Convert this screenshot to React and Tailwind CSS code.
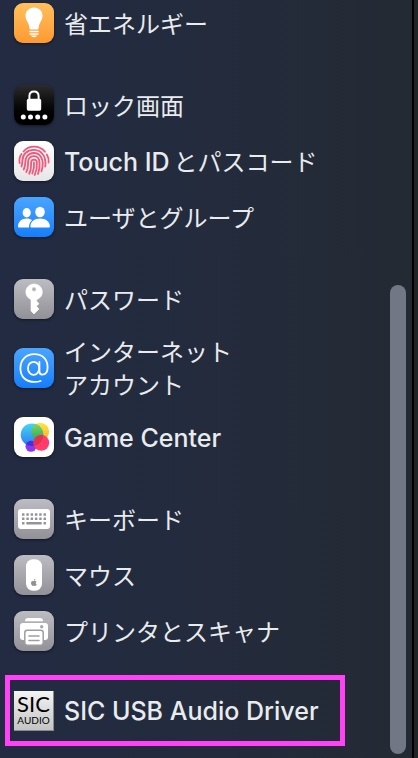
import { useId } from 'react';

const TILE = {
  orange: 'from-[#ffc05c] to-[#ff9930]',
  black: 'from-[#2c2c2e] to-[#000000]',
  white: 'from-[#ffffff] to-[#e6e6e8]',
  plain: 'from-[#ffffff] to-[#ffffff]',
  blue: 'from-[#4aa5ff] to-[#147efb]',
  gray: 'from-[#bdbcc2] to-[#929197]',
};

const Tile = ({ tone, children }) => (
  <span className={`block size-10 shrink-0 overflow-hidden rounded-[9px] bg-linear-to-b shadow-sm shadow-black/40 ${TILE[tone]}`}>
    <svg viewBox="0 0 40 40" className="block size-10" fill="none" aria-hidden="true">
      {children}
    </svg>
  </span>
);

const EnergyIcon = () => (
  <Tile tone="orange">
    <path
      d="M20 4.5c-5 0-8.5 3.6-8.5 8.3 0 3.3 1.6 5.4 2.8 7.8.8 1.7.9 3.3 1.2 5 .1.7.5 1 1.1 1h6.8c.6 0 1-.3 1.1-1 .3-1.7.4-3.3 1.2-5 1.2-2.4 2.8-4.5 2.8-7.8 0-4.7-3.5-8.3-8.5-8.3z"
      fill="#fff"
    />
    <path d="M15.8 28.5h8.4M16 31h8" stroke="#fff" strokeWidth="1.5" strokeLinecap="round" />
    <path d="M17 32.6h6c-.5 1.2-1.6 1.7-3 1.7s-2.5-.5-3-1.7z" fill="#fff" />
  </Tile>
);

const LockIcon = () => (
  <Tile tone="black">
    <path d="M15.4 15v-3.7c0-3 1.9-4.7 4.6-4.7s4.6 1.7 4.6 4.7V15" stroke="#fff" strokeWidth="2" />
    <rect x="12.8" y="13.8" width="14.4" height="12" rx="1.8" fill="#fff" />
    {[9.3, 16.5, 23.7, 30.9].map((x) => (
      <circle key={x} cx={x} cy="32" r="2.5" fill="#fff" />
    ))}
  </Tile>
);

const TouchIcon = () => (
  <Tile tone="white">
    <g stroke="#f2587a" strokeWidth="1.8" strokeLinecap="round">
      <path d="M9.5 10.5C12 7.3 15.8 5.6 20 5.6c4.5 0 8.5 2 11 5.2" />
      <path d="M5.7 22c-.6-3 0-6.5 1.8-9M32.8 13.5c1.6 2.5 2.2 5 1.8 8" />
      <path d="M7.5 25.5c2-7-.5-9.5 4-13.5 5-4.5 13-4 17 1 3 3.5 3.3 8 2.8 12.5" />
      <path d="M9.7 28.5c2.8-5 .3-9.5 3.3-13.3 3.5-4.4 10.5-4.2 13.7.3 2.5 3.7 2.3 9.5.8 14.8" />
      <path d="M12.3 31c2.7-4.6 1.2-8.5 2-11.7 1.5-5.3 9.3-5.5 10.8-.2.9 3.6.4 8.9-1.1 13.9" />
      <path d="M15.2 32.8c2.6-4.8 1.8-8.5 1.9-11.6.3-3.5 5.4-3.5 5.8 0 .3 4.3-.4 8.6-2.2 12.8" />
      <path d="M20 21.5c.3 3.7-.2 7.5-1.7 11" />
    </g>
  </Tile>
);

const UsersIcon = () => (
  <Tile tone="blue">
    <ellipse cx="12.7" cy="15.7" rx="4.1" ry="4.7" fill="#fff" />
    <path d="M4 29.5c0-4.6 3.5-8 8.7-8 2.2 0 4 .6 5.4 1.6-2 1.7-3 4-3.1 7.5H5c-.7 0-1-.4-1-1.1z" fill="#fff" />
    <ellipse cx="26" cy="15" rx="4.8" ry="5.3" fill="#fff" />
    <path d="M16.4 29.3c0-4.7 4-7.9 9.7-7.9s9.8 3.2 9.8 7.9c0 .9-.4 1.3-1.3 1.3H17.7c-.9 0-1.3-.4-1.3-1.3z" fill="#fff" />
  </Tile>
);

const KeyIcon = () => (
  <Tile tone="gray">
    <path
      fillRule="evenodd"
      d="M20 5a8 8 0 0 0-3 15.5v11.4l3 3.1 5-5-2.6-2.8 2.6-2.5-2.5-2.7v-1.3A8 8 0 0 0 20 5zm0 3a2.2 2.2 0 1 1 0 4.4 2.2 2.2 0 0 1 0-4.4z"
      fill="#fff"
      stroke="#fff"
      strokeWidth=".6"
      strokeLinejoin="round"
    />
  </Tile>
);

const AtIcon = () => (
  <Tile tone="blue">
    <g stroke="#fff" strokeWidth="1.8" strokeLinecap="round">
      <ellipse cx="19.6" cy="20.3" rx="5.7" ry="6.5" />
      <path d="M25.4 14v9.3c0 2.2 1 3.3 2.9 3.3 3.2 0 5.3-2.9 5.3-7.4 0-8.2-5.3-13-13.2-13C12 6.2 6.4 11.8 6.4 20.2c0 8.5 5.4 13.7 14.2 13.7 2.3 0 4.3-.3 6-.9" />
    </g>
  </Tile>
);

const GameIcon = () => {
  const id = useId();
  return (
    <Tile tone="plain">
      <defs>
        <linearGradient id={`${id}b`} x1="0" y1="0" x2="0" y2="1">
          <stop stopColor="#45d7f2" />
          <stop offset="1" stopColor="#2b79f5" />
        </linearGradient>
        <linearGradient id={`${id}y`} x1="0" y1="0" x2="0" y2="1">
          <stop stopColor="#ffe63d" />
          <stop offset="1" stopColor="#ffab2e" />
        </linearGradient>
        <linearGradient id={`${id}g`} x1="0" y1="0" x2="0" y2="1">
          <stop stopColor="#8fd65a" />
          <stop offset="1" stopColor="#20a869" />
        </linearGradient>
        <clipPath id={`${id}c`}>
          <circle cx="18" cy="17.8" r="11.3" />
        </clipPath>
      </defs>
      <circle cx="17" cy="29.3" r="5.5" fill="#8b35f5" />
      <circle cx="26.2" cy="14.6" r="8.9" fill={`url(#${id}y)`} />
      <circle cx="18" cy="17.8" r="11.3" fill={`url(#${id}b)`} />
      <g clipPath={`url(#${id}c)`}>
        <circle cx="26.2" cy="14.6" r="8.9" fill={`url(#${id}g)`} />
        <circle cx="17" cy="29.3" r="5.5" fill="#4b2dd9" />
      </g>
      <circle cx="27.3" cy="25.8" r="7.9" fill="#ff3c6c" />
      <g clipPath={`url(#${id}c)`}>
        <circle cx="27.3" cy="25.8" r="7.9" fill="#e5304f" />
      </g>
    </Tile>
  );
};

const KeyboardIcon = () => (
  <Tile tone="gray">
    <rect x="4" y="10" width="32" height="20" rx="3" fill="#fff" />
    <g fill="#949399">
      {[8, 12.3, 16.6, 20.9, 25.2, 29.5].map((x) => (
        <g key={x}>
          <rect x={x} y="14.3" width="2.5" height="2.5" rx=".5" />
          <rect x={x} y="18.6" width="2.5" height="2.5" rx=".5" />
        </g>
      ))}
      <rect x="8" y="23" width="2.5" height="2.5" rx=".5" />
      <rect x="12.3" y="23" width="15.4" height="2.5" rx=".5" />
      <rect x="29.5" y="23" width="2.5" height="2.5" rx=".5" />
    </g>
  </Tile>
);

const MouseIcon = () => (
  <Tile tone="gray">
    <rect x="12" y="4.3" width="16" height="31.5" rx="7" fill="#fff" />
    <path d="M19.7 26.3c-1.2-.8-2.7 0-2.7 1.7 0 1.5 1 3 2 3 .4 0 .6-.2 1-.2s.6.2 1 .2c.8 0 1.4-.8 1.7-1.7-1.2-.6-1.2-2 0-2.6-.7-.9-1.7-.9-3-.4zM19.7 25.8c0-1 .7-1.9 1.7-2 .1 1-.7 2-1.7 2z" fill="#929197" />
  </Tile>
);

const PrinterIcon = () => (
  <Tile tone="gray">
    <path d="M11 10.3c0-2.2 1-3.3 3-3.3h12c2 0 3 1.1 3 3.3z" fill="#fff" />
    <rect x="6" y="12" width="28" height="17" rx="3" fill="#fff" />
    <circle cx="27.7" cy="15.7" r="1.7" fill="#a5a4aa" />
    <rect x="10.8" y="19.3" width="18.4" height="15" rx="2.5" fill="#fff" stroke="#9e9da3" strokeWidth="1.5" />
    <path d="M15 25h10M15 29.5h10" stroke="#9e9da3" strokeWidth="1.6" strokeLinecap="round" />
  </Tile>
);

const SicIcon = () => (
  <span className="flex size-10 shrink-0 flex-col items-center justify-center border-r border-b border-[#8a8a8a] bg-linear-to-b from-[#f4f4f4] to-[#c4c4c4] font-['Lato',sans-serif] text-black">
    <span className="text-[22px] leading-5">SIC</span>
    <span className="text-[10px] leading-3">AUDIO</span>
  </span>
);

const GROUPS = [
  [{ icon: EnergyIcon, ja: ['省エネルギー'] }],
  [
    { icon: LockIcon, ja: ['ロック画面'] },
    { icon: TouchIcon, en: 'Touch ID', ja: ['とパスコード'] },
    { icon: UsersIcon, ja: ['ユーザとグループ'] },
  ],
  [
    { icon: KeyIcon, ja: ['パスワード'] },
    { icon: AtIcon, ja: ['インターネット', 'アカウント'] },
    { icon: GameIcon, en: 'Game Center' },
  ],
  [
    { icon: KeyboardIcon, ja: ['キーボード'] },
    { icon: MouseIcon, ja: ['マウス'] },
    { icon: PrinterIcon, ja: ['プリンタとスキャナ'] },
  ],
];

const Label = ({ en, ja = [] }) => (
  <span className="flex items-baseline gap-1 pt-[2px] whitespace-nowrap">
    {en && <span className="text-[25px] leading-[33px] font-medium">{en}</span>}
    {ja.length > 0 && (
      <span className="text-2xl leading-[33px]">
        {ja.map((line) => (
          <span key={line} className="block">{line}</span>
        ))}
      </span>
    )}
  </span>
);

const Item = ({ icon: Icon, en, ja }) => (
  <li>
    <a href="#" className="flex min-h-14 items-center gap-[10px] py-[7px] pl-[14px]">
      <Icon />
      <Label en={en} ja={ja} />
    </a>
  </li>
);

export default function App() {
  return (
    <div className="flex h-screen overflow-hidden bg-[#202628] font-['Inter','Noto_Sans_CJK_JP',sans-serif] text-[#e9ebed]">
      <div className="flex min-w-0 flex-1 border-r-2 border-black bg-linear-to-r from-[#222b42] via-[#232b3d] to-[#242a33]">
        <nav className="-mt-[5px] min-w-0 flex-1">
          <div className="flex flex-col gap-[26px]">
            {GROUPS.map((items, i) => (
              <ul key={i}>
                {items.map((item, n) => (
                  <Item key={n} {...item} />
                ))}
              </ul>
            ))}
          </div>
          <a href="#" className="mt-4 mr-[45px] ml-[5px] flex h-[71px] items-center gap-[10px] border-5 border-[#ff42f5] pl-1">
            <SicIcon />
            <Label en="SIC USB Audio Driver" />
          </a>
        </nav>
        <div className="mr-[6px] flex w-4 flex-col pb-1">
          <div className="flex-[285]" />
          <div className="flex-[469] rounded-full bg-[#717784]" />
        </div>
      </div>
      <div className="w-1" />
    </div>
  );
}
